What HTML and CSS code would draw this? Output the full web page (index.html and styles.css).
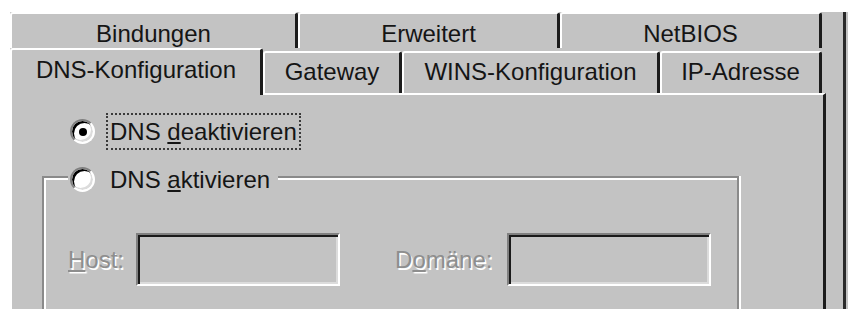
FILE: index.html
```html
<!DOCTYPE html>
<html lang="de">
<head>
<meta charset="utf-8">
<title>TCP/IP-Eigenschaften</title>
<link rel="stylesheet" href="styles.css">
</head>
<body>
<div class="window">
  <div class="tabctl">
    <div class="tabrow back">
      <div class="tab w-bind">Bindungen</div>
      <div class="tab w-erw">Erweitert</div>
      <div class="tab w-net">NetBIOS</div>
    </div>
    <div class="tabrow front">
      <div class="tab sel w-dns">DNS-Konfiguration</div>
      <div class="tab w-gw">Gateway</div>
      <div class="tab w-wins">WINS-Konfiguration</div>
      <div class="tab w-ip">IP-Adresse</div>
    </div>
    <div class="panel">
      <div class="opt first">
        <span class="radio checked"></span>
        <span class="optlabel focus">DNS <u>d</u>eaktivieren</span>
      </div>
      <div class="group">
        <div class="opt legend">
          <span class="radio"></span>
          <span class="optlabel">DNS <u>a</u>ktivieren</span>
        </div>
        <div class="fields">
          <span class="dis lbl-host"><u>H</u>ost:</span>
          <span class="edit"></span>
          <span class="dis lbl-dom">D<u>o</u>mäne:</span>
          <span class="edit"></span>
        </div>
      </div>
    </div>
  </div>
  <div class="side"></div>
</div>
</body>
</html>
```
FILE: styles.css
```css
html, body {
  margin: 0;
  padding: 0;
  background: #ffffff;
  overflow: hidden;
}
body {
  width: 848px;
  height: 309px;
  font-family: "Liberation Sans", Arial, sans-serif;
  font-size: 24px;
  line-height: 28px;
  color: #151515;
}
.window {
  margin: 12px 0 0 10px;
  width: 838px;
  height: 297px;
  background: #c3c3c3;
  display: flex;
  overflow: hidden;
}
.tabctl {
  width: 816px;
  display: flex;
  flex-direction: column;
}
.side {
  width: 17px;
  border-right: 3px solid #2a2a2a;
}
.tabrow {
  display: flex;
}
.tabrow.back {
  height: 36px;
}
.tabrow.front {
  height: 45px;
  align-items: flex-end;
}
.tab {
  box-sizing: border-box;
  text-align: center;
  border-top: 2px solid #ffffff;
  border-left: 2px solid #ffffff;
  border-right: 3px solid #1c1c1c;
  border-top-left-radius: 3px;
  border-top-right-radius: 3px;
  background: #c3c3c3;
  white-space: nowrap;
}
.back .tab {
  height: 36px;
  padding-top: 6px;
}
.front .tab {
  height: 42px;
  padding-top: 5px;
}
.front .tab.sel {
  height: 47px;
  margin-bottom: -2px;
  padding-top: 6px;
  position: relative;
  z-index: 1;
}
.w-bind { width: 288px; }
.w-erw { width: 262px; }
.w-net { width: 262px; }
.w-dns { width: 253px; }
.w-gw { width: 139px; }
.w-wins { width: 258px; }
.w-ip { width: 162px; }

.panel {
  flex: 1;
  min-height: 0;
  border-top: 2px solid #ffffff;
  border-left: 2px solid #ffffff;
  border-right: 3px solid #1c1c1c;
  display: flex;
  flex-direction: column;
}
.opt {
  display: flex;
  align-items: center;
}
.opt.first {
  margin: 18px 0 0 58px;
}
.radio {
  box-sizing: border-box;
  width: 25px;
  height: 25px;
  border-radius: 50%;
  background: #ffffff;
  border: 2px solid;
  border-color: #808080 #ffffff #ffffff #808080;
  box-shadow: inset 2px 2px 0 #000000, inset -2px -2px 0 #dcdcdc;
  display: flex;
  align-items: center;
  justify-content: center;
  flex: none;
}
.radio.checked::after {
  content: "";
  width: 8px;
  height: 8px;
  border-radius: 50%;
  background: #000000;
}
.optlabel {
  margin-left: 11px;
  border: 2px solid transparent;
  padding: 3px 2px 2px 2px;
}
.optlabel.focus {
  border: 2px dotted #3a3a3a;
}
.group {
  margin: 26px 0 0 30px;
  width: 697px;
  flex: 1;
  min-height: 0;
  box-sizing: border-box;
  border: 2px solid #8a8a8a;
  border-bottom: 0;
  box-shadow: inset 2px 2px 0 #ffffff, 2px 0 0 #ffffff;
  display: flex;
  flex-direction: column;
}
.opt.legend {
  align-self: flex-start;
  margin: -17px 0 0 24px;
  padding: 0 4px 0 2px;
  background: #c3c3c3;
}
.fields {
  display: flex;
  align-items: center;
  margin-top: 35px;
  padding-left: 24px;
}
.dis {
  color: #8e8e8e;
  text-shadow: 1.5px 1.5px 0 #ffffff;
}
.lbl-host { margin-right: 12px; }
.lbl-dom { margin: 0 15px 0 55px; }
.edit {
  box-sizing: border-box;
  width: 204px;
  height: 53px;
  border-top: 2px solid #808080;
  border-left: 2px solid #808080;
  border-bottom: 2px solid #ffffff;
  border-right: 2px solid #ffffff;
  box-shadow: inset 2px 2px 0 #1a1a1a, inset -2px -2px 0 #dcdcdc;
  background: #c3c3c3;
}
```
